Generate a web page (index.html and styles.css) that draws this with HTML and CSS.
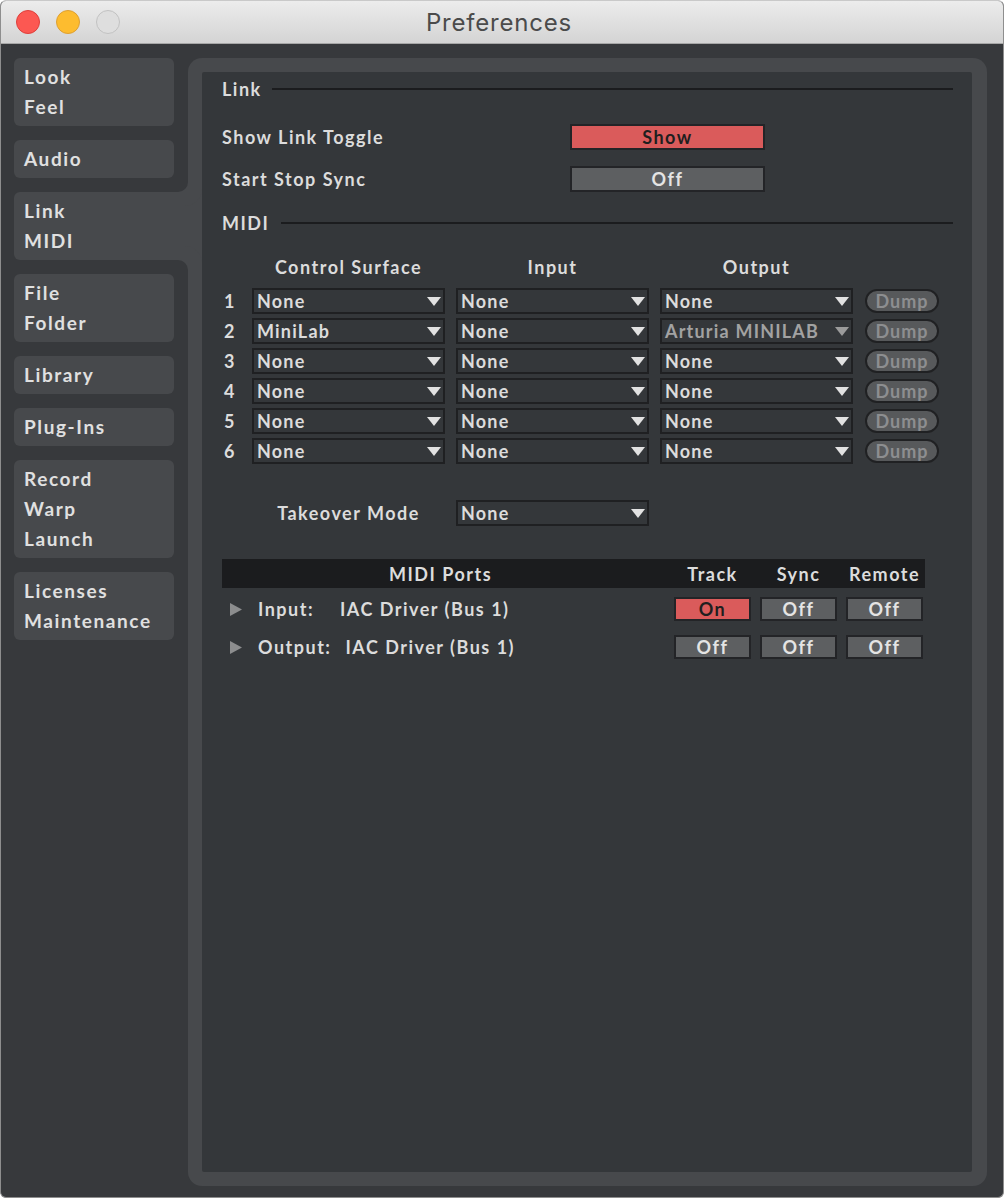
FILE: index.html
```html
<!DOCTYPE html>
<html>
<head>
<meta charset="utf-8">
<title>Preferences</title>
<link rel="stylesheet" href="styles.css">
</head>
<body>
<div class="window">
  <div class="titlebar">
    <div class="lights">
      <span class="light red"></span>
      <span class="light yellow"></span>
      <span class="light gray"></span>
    </div>
    <div class="title">Preferences</div>
    <div></div>
  </div>
  <div class="main">
    <nav class="sidebar">
      <div class="tab"><span>Look</span><span>Feel</span></div>
      <div class="tab"><span>Audio</span></div>
      <div class="tab active"><span>Link</span><span>MIDI</span></div>
      <div class="tab"><span>File</span><span>Folder</span></div>
      <div class="tab"><span>Library</span></div>
      <div class="tab"><span>Plug-Ins</span></div>
      <div class="tab"><span>Record</span><span>Warp</span><span>Launch</span></div>
      <div class="tab"><span>Licenses</span><span>Maintenance</span></div>
    </nav>
    <div class="panel">
      <div class="content">
        <div class="section-head"><span>Link</span><div class="rule"></div></div>
        <div class="pref-row first">
          <span class="label">Show Link Toggle</span>
          <div class="toggle on">Show</div>
        </div>
        <div class="pref-row">
          <span class="label">Start Stop Sync</span>
          <div class="toggle">Off</div>
        </div>
        <div class="section-head midi"><span>MIDI</span><div class="rule midi-rule"></div></div>

        <div class="midi-grid">
          <div></div>
          <div class="colhead">Control Surface</div>
          <div class="colhead">Input</div>
          <div class="colhead">Output</div>
          <div></div>

          <div class="num">1</div>
          <div class="dd"><span>None</span><svg class="tri" width="14" height="9" viewBox="0 0 14 9"><polygon points="0,0 14,0 7,9"/></svg></div>
          <div class="dd"><span>None</span><svg class="tri" width="14" height="9" viewBox="0 0 14 9"><polygon points="0,0 14,0 7,9"/></svg></div>
          <div class="dd"><span>None</span><svg class="tri" width="14" height="9" viewBox="0 0 14 9"><polygon points="0,0 14,0 7,9"/></svg></div>
          <div class="dump">Dump</div>

          <div class="num">2</div>
          <div class="dd"><span>MiniLab</span><svg class="tri" width="14" height="9" viewBox="0 0 14 9"><polygon points="0,0 14,0 7,9"/></svg></div>
          <div class="dd"><span>None</span><svg class="tri" width="14" height="9" viewBox="0 0 14 9"><polygon points="0,0 14,0 7,9"/></svg></div>
          <div class="dd dim"><span>Arturia MINILAB</span><svg class="tri" width="14" height="9" viewBox="0 0 14 9"><polygon points="0,0 14,0 7,9"/></svg></div>
          <div class="dump">Dump</div>

          <div class="num">3</div>
          <div class="dd"><span>None</span><svg class="tri" width="14" height="9" viewBox="0 0 14 9"><polygon points="0,0 14,0 7,9"/></svg></div>
          <div class="dd"><span>None</span><svg class="tri" width="14" height="9" viewBox="0 0 14 9"><polygon points="0,0 14,0 7,9"/></svg></div>
          <div class="dd"><span>None</span><svg class="tri" width="14" height="9" viewBox="0 0 14 9"><polygon points="0,0 14,0 7,9"/></svg></div>
          <div class="dump">Dump</div>

          <div class="num">4</div>
          <div class="dd"><span>None</span><svg class="tri" width="14" height="9" viewBox="0 0 14 9"><polygon points="0,0 14,0 7,9"/></svg></div>
          <div class="dd"><span>None</span><svg class="tri" width="14" height="9" viewBox="0 0 14 9"><polygon points="0,0 14,0 7,9"/></svg></div>
          <div class="dd"><span>None</span><svg class="tri" width="14" height="9" viewBox="0 0 14 9"><polygon points="0,0 14,0 7,9"/></svg></div>
          <div class="dump">Dump</div>

          <div class="num">5</div>
          <div class="dd"><span>None</span><svg class="tri" width="14" height="9" viewBox="0 0 14 9"><polygon points="0,0 14,0 7,9"/></svg></div>
          <div class="dd"><span>None</span><svg class="tri" width="14" height="9" viewBox="0 0 14 9"><polygon points="0,0 14,0 7,9"/></svg></div>
          <div class="dd"><span>None</span><svg class="tri" width="14" height="9" viewBox="0 0 14 9"><polygon points="0,0 14,0 7,9"/></svg></div>
          <div class="dump">Dump</div>

          <div class="num">6</div>
          <div class="dd"><span>None</span><svg class="tri" width="14" height="9" viewBox="0 0 14 9"><polygon points="0,0 14,0 7,9"/></svg></div>
          <div class="dd"><span>None</span><svg class="tri" width="14" height="9" viewBox="0 0 14 9"><polygon points="0,0 14,0 7,9"/></svg></div>
          <div class="dd"><span>None</span><svg class="tri" width="14" height="9" viewBox="0 0 14 9"><polygon points="0,0 14,0 7,9"/></svg></div>
          <div class="dump">Dump</div>
        </div>

        <div class="takeover">
          <div></div>
          <div class="colhead">Takeover Mode</div>
          <div class="dd"><span>None</span><svg class="tri" width="14" height="9" viewBox="0 0 14 9"><polygon points="0,0 14,0 7,9"/></svg></div>
        </div>

        <div class="ports">
          <div class="ports-head">
            <div class="ph-name">MIDI Ports</div>
            <div class="ph">Track</div>
            <div class="ph">Sync</div>
            <div class="ph">Remote</div>
          </div>
          <div class="port-row">
            <div class="port-name">
              <svg class="expand" width="12" height="13" viewBox="0 0 12 13"><polygon points="0,0 12,6.5 0,13"/></svg>
              <span class="port-label">Input:</span><span>IAC Driver (Bus 1)</span>
            </div>
            <div class="pbtn on">On</div>
            <div class="pbtn">Off</div>
            <div class="pbtn">Off</div>
          </div>
          <div class="port-row">
            <div class="port-name">
              <svg class="expand" width="12" height="13" viewBox="0 0 12 13"><polygon points="0,0 12,6.5 0,13"/></svg>
              <span class="port-label">Output:</span><span>IAC Driver (Bus 1)</span>
            </div>
            <div class="pbtn">Off</div>
            <div class="pbtn">Off</div>
            <div class="pbtn">Off</div>
          </div>
        </div>
      </div>
    </div>
  </div>
</div>
</body>
</html>
```
FILE: styles.css
```css
html, body {
  margin: 0;
  padding: 0;
  background: #ffffff;
}

.window {
  width: 1004px;
  height: 1198px;
  box-sizing: border-box;
  border: 1px solid #8e8e8e;
  border-top-color: #c9c9c9;
  border-radius: 6px;
  overflow: hidden;
  display: flex;
  flex-direction: column;
  background: #37393c;
  font-family: "Lato", "DejaVu Sans", sans-serif;
  font-weight: 700;
  color: #dcdcdc;
}

/* Title bar */
.titlebar {
  height: 42px;
  flex-shrink: 0;
  border-bottom: 1px solid #a7a7a7;
  background: linear-gradient(#ececec, #d4d4d4);
  display: grid;
  grid-template-columns: 1fr auto 1fr;
  align-items: center;
}

.lights {
  display: flex;
  gap: 16px;
  padding-left: 15px;
}

.light {
  width: 24px;
  height: 24px;
  box-sizing: border-box;
  border-radius: 50%;
  border: 1px solid;
}

.light.red { background: #fc5852; border-color: #df3f3b; }
.light.yellow { background: #fdbc2f; border-color: #dea032; }
.light.gray { background: #dedede; border-color: #c2c2c2; }

.title {
  font-family: "Inter", "Liberation Sans", sans-serif;
  font-weight: 400;
  font-size: 24px;
  color: #4b4b4b;
  letter-spacing: 0.8px;
  padding-right: 6px;
}

/* Main area */
.main {
  flex: 1;
  display: flex;
  padding: 14px 16px 11px 13px;
  min-height: 0;
}

.sidebar {
  width: 174px;
  flex-shrink: 0;
  display: flex;
  flex-direction: column;
  gap: 14px;
}

.tab {
  width: 160px;
  box-sizing: border-box;
  background: #47494c;
  border-radius: 6px;
  padding: 4px 10px;
  display: flex;
  flex-direction: column;
  font-size: 19px;
  letter-spacing: 1.6px;
  color: #e0e0e0;
}

.tab span {
  line-height: 30px;
}

.tab.active {
  position: relative;
  width: 174px;
  border-radius: 6px 0 0 6px;
}

.tab.active::before {
  content: "";
  position: absolute;
  right: 0;
  top: -14px;
  width: 14px;
  height: 14px;
  border-bottom-right-radius: 10px;
  box-shadow: 7px 7px 0 7px #47494c;
}

.tab.active::after {
  content: "";
  position: absolute;
  right: 0;
  bottom: -14px;
  width: 14px;
  height: 14px;
  border-top-right-radius: 10px;
  box-shadow: 7px -7px 0 7px #47494c;
}

.panel {
  flex: 1;
  display: flex;
  background: #47494c;
  border-radius: 14px;
  padding: 14px 15px 14px 14px;
}

.content {
  flex: 1;
  background: #34373a;
  border-radius: 2px;
  padding: 0 19px 0 20px;
  font-size: 18px;
  letter-spacing: 1.5px;
}

/* Sections */
.section-head {
  height: 34px;
  display: flex;
  align-items: center;
  gap: 10px;
}

.section-head.midi {
  margin-top: 6px;
  gap: 12px;
}

.rule {
  flex: 1;
  height: 2px;
  background: #1b1c1e;
}

.pref-row {
  height: 42px;
  display: grid;
  grid-template-columns: 348px 195px;
  align-items: center;
}

.pref-row.first {
  margin-top: 10px;
}

.toggle,
.pbtn {
  height: 26px;
  box-sizing: border-box;
  border: 2px solid #232427;
  background: #5d5f61;
  color: #e4e4e4;
  display: flex;
  align-items: center;
  justify-content: center;
}

.toggle.on,
.pbtn.on {
  background: #da5b5b;
  color: #1f1f1f;
}

/* MIDI grid */
.midi-grid {
  margin-top: 10px;
  display: grid;
  grid-template-columns: 19px 193px 193px 193px 75px;
  grid-template-rows: 34px repeat(6, 26px);
  column-gap: 11px;
  row-gap: 4px;
  align-items: center;
}

.colhead {
  text-align: center;
}

.num {
  padding-left: 2px;
}

.dd {
  height: 26px;
  box-sizing: border-box;
  border: 2px solid #1f2022;
  display: flex;
  align-items: center;
  justify-content: space-between;
  padding: 0 2px 0 3px;
  white-space: nowrap;
  letter-spacing: 1.2px;
}

.tri {
  fill: #e2e2e2;
  flex-shrink: 0;
}

.dd.dim {
  color: #a2a2a2;
}

.dd.dim .tri {
  fill: #9b9b9b;
}

.dump {
  height: 24px;
  box-sizing: border-box;
  border-radius: 12px;
  border: 2px solid #202123;
  background: #57595b;
  color: #8d8e90;
  display: flex;
  align-items: center;
  justify-content: center;
  font-size: 18px;
  letter-spacing: 1px;
  margin-left: 1px;
}

/* Takeover */
.takeover {
  margin-top: 36px;
  display: grid;
  grid-template-columns: 19px 193px 193px;
  column-gap: 11px;
  height: 26px;
  align-items: center;
}

/* MIDI Ports */
.ports {
  margin-top: 33px;
  width: 703px;
}

.ports-head {
  height: 29px;
  background: #1b1c1e;
  display: grid;
  grid-template-columns: 443px 77px 77px 77px;
  column-gap: 9px;
  align-items: center;
}

.ph-name {
  text-align: center;
  padding-right: 6px;
}

.ph {
  text-align: center;
}

.ports-head + .port-row {
  margin-top: 2px;
}

.port-row {
  height: 38px;
  display: grid;
  grid-template-columns: 443px 77px 77px 77px;
  column-gap: 9px;
  align-items: center;
}

.port-row .pbtn {
  height: 24px;
}

.port-name {
  display: flex;
  align-items: center;
  padding-left: 8px;
  white-space: nowrap;
}

.expand {
  fill: #8c8d8e;
  margin-right: 16px;
  flex-shrink: 0;
}

.port-label {
  min-width: 68px;
  margin-right: 14px;
}
```
